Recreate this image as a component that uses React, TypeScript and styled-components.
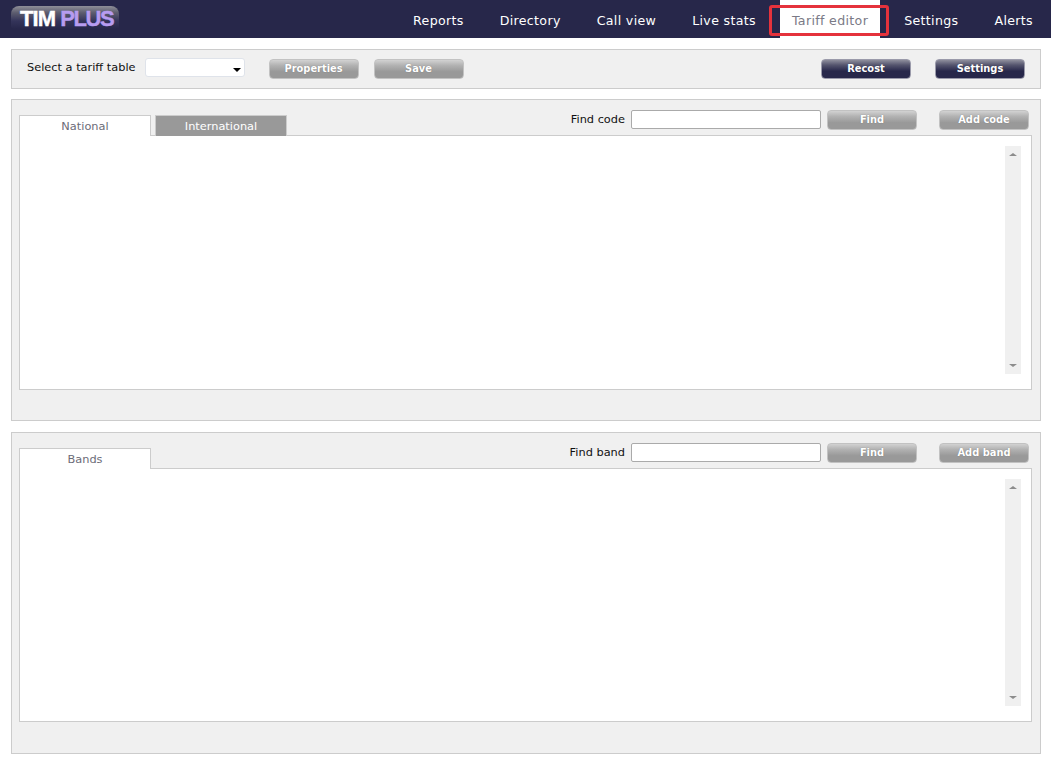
import styled, { createGlobalStyle } from "styled-components";

const GlobalStyle = createGlobalStyle`
  html, body {
    margin: 0;
    background: #fff;
    font-family: "DejaVu Sans", Verdana, sans-serif;
    font-size: 11.35px;
  }
`;

const Header = styled.header`
  position: relative;
  display: flex;
  align-items: stretch;
  justify-content: space-between;
  height: 38px;
  background: #27274a;
`;

const Logo = styled.div`
  display: flex;
  align-items: center;
  width: 108px;
  height: 23px;
  margin: 6px 0 0 11px;
  padding: 2px 0 0 9px;
  box-sizing: border-box;
  border-radius: 8px 8px 3px 3px;
  background: linear-gradient(#8f8f98 0, #5c5c6e 30%, #34345a 65%, #27274a 100%);
  font-family: "Liberation Sans", Arial, sans-serif;
  font-size: 22px;
  font-weight: 700;
  letter-spacing: -0.9px;
  line-height: 23px;
  color: #fff;
  -webkit-text-stroke: 0.4px currentColor;
`;

const LogoAccent = styled.span`
  margin-left: 5px;
  letter-spacing: -1.4px;
  color: #b79cf0;
`;

const Nav = styled.nav`
  display: flex;
`;

const NavItem = styled.a<{ $active?: boolean }>`
  display: flex;
  align-items: center;
  margin: 0 6px;
  padding: 2px 12px 0;
  font-size: 12.6px;
  letter-spacing: 0.33px;
  white-space: nowrap;
  color: ${(p) => (p.$active ? "#7a7a86" : "#fff")};
  background: ${(p) => (p.$active ? "#fff" : "transparent")};
`;

const Highlight = styled.div`
  position: absolute;
  left: 769px;
  top: 5px;
  width: 120px;
  height: 31px;
  box-sizing: border-box;
  border: 3px solid #e5323c;
  border-radius: 3px;
  pointer-events: none;
`;

const Page = styled.main`
  display: flex;
  flex-direction: column;
  padding: 11px 10px 0 11px;
`;

const Panel = styled.section`
  box-sizing: border-box;
  background: #f0f0f0;
  border: 1px solid #ccc;
`;

const Toolbar = styled(Panel)`
  display: flex;
  align-items: center;
  height: 40px;
  margin-bottom: 10px;
  padding: 0 15px;
`;

const ToolbarLabel = styled.label`
  margin: -4px 9px 0 0;
  color: #111;
  white-space: nowrap;
`;

const Select = styled.div`
  position: relative;
  box-sizing: border-box;
  width: 100px;
  height: 19px;
  margin: -3px 24px 0 0;
  background: #fff;
  border: 1px solid #dfe3ea;
  border-radius: 3px;

  &::after {
    content: "";
    position: absolute;
    right: 3px;
    top: 9px;
    border: 4px solid transparent;
    border-bottom-width: 0;
    border-top-color: #000;
  }
`;

const Button = styled.button<{ $dark?: boolean; $gap?: number }>`
  box-sizing: border-box;
  width: 90px;
  height: 20px;
  margin: 0 0 0 ${(p) => p.$gap ?? 0}px;
  padding: 0 0 2px;
  flex: none;
  border: 1px solid ${(p) => (p.$dark ? "#9a9aaa" : "#c2c2c2")};
  border-radius: 4px;
  background: ${(p) =>
    p.$dark
      ? "linear-gradient(#8e8e9c 0, #55556e 28%, #27274a 62%, #27274a 100%)"
      : "linear-gradient(#d2d2d2 0, #b2b2b2 30%, #999 65%, #999 100%)"};
  font-family: inherit;
  font-size: 9.9px;
  font-weight: 700;
  color: #fff;
  text-shadow: 0 0 1px rgba(0, 0, 0, 0.35);
`;

const Spacer = styled.div`
  flex: 1;
`;

const EditorPanel = styled(Panel)`
  height: 322px;
  margin-bottom: 11px;
  padding: 10px 8px 0 7px;
`;

const EditorHead = styled.div`
  display: flex;
  justify-content: space-between;
  height: 26px;
  margin-bottom: -1px;
`;

const Tabs = styled.div`
  display: flex;
  align-items: flex-end;
  gap: 4px;
`;

const Tab = styled.div<{ $active?: boolean }>`
  position: relative;
  z-index: 1;
  box-sizing: border-box;
  display: flex;
  align-items: center;
  justify-content: center;
  width: 132px;
  height: 21px;
  border: 1px solid #ccc;
  border-bottom: 0;
  background: ${(p) => (p.$active ? "#fff" : "#999")};
  color: ${(p) => (p.$active ? "#6c6c78" : "#fff")};
`;

const Tools = styled.div`
  display: flex;
  align-items: flex-start;
  margin-right: 3px;
`;

const FindLabel = styled.label`
  margin-right: 6px;
  line-height: 19px;
  color: #111;
  white-space: nowrap;
`;

const FindInput = styled.input`
  box-sizing: border-box;
  width: 190px;
  height: 19px;
  margin: 0 6px 0 0;
  padding: 0 3px;
  background: #fff;
  border: 1px solid #aaa;
  border-radius: 2px;
  outline: none;
`;

const TableBox = styled.div<{ $height: number }>`
  box-sizing: border-box;
  display: flex;
  justify-content: flex-end;
  height: ${(p) => p.$height}px;
  padding: 10px 10px 15px 0;
  background: #fff;
  border: 1px solid #ccc;
`;

const Scrollbar = styled.div`
  display: flex;
  flex-direction: column;
  align-items: center;
  justify-content: space-between;
  width: 16px;
  padding: 7px 0;
  box-sizing: border-box;
  background: #f0f0f0;
`;

const Arrow = styled.span<{ $down?: boolean }>`
  width: 0;
  height: 0;
  border-left: 4px solid transparent;
  border-right: 4px solid transparent;
  ${(p) =>
    p.$down ? "border-top: 3px solid #8c8c8c;" : "border-bottom: 3px solid #8c8c8c;"}
`;

const Editor = ({
  tabs,
  findLabel,
  addLabel,
  boxHeight,
}: {
  tabs: string[];
  findLabel: string;
  addLabel: string;
  boxHeight: number;
}) => (
  <EditorPanel>
    <EditorHead>
      <Tabs>
        {tabs.map((t, i) => (
          <Tab key={t} $active={i === 0}>
            {t}
          </Tab>
        ))}
      </Tabs>
      <Tools>
        <FindLabel>{findLabel}</FindLabel>
        <FindInput />
        <Button>Find</Button>
        <Button $gap={22}>{addLabel}</Button>
      </Tools>
    </EditorHead>
    <TableBox $height={boxHeight}>
      <Scrollbar>
        <Arrow />
        <Arrow $down />
      </Scrollbar>
    </TableBox>
  </EditorPanel>
);

const navItems = ["Reports", "Directory", "Call view", "Live stats", "Tariff editor", "Settings", "Alerts"];

export default function App() {
  return (
    <>
      <GlobalStyle />
      <Header>
        <Logo>
          TIM<LogoAccent>PLUS</LogoAccent>
        </Logo>
        <Nav>
          {navItems.map((n) => (
            <NavItem key={n} $active={n === "Tariff editor"}>
              {n}
            </NavItem>
          ))}
        </Nav>
        <Highlight />
      </Header>
      <Page>
        <Toolbar>
          <ToolbarLabel>Select a tariff table</ToolbarLabel>
          <Select />
          <Button>Properties</Button>
          <Button $gap={15}>Save</Button>
          <Spacer />
          <Button $dark>Recost</Button>
          <Button $dark $gap={24}>Settings</Button>
        </Toolbar>
        <Editor tabs={["National", "International"]} findLabel="Find code" addLabel="Add code" boxHeight={255} />
        <Editor tabs={["Bands"]} findLabel="Find band" addLabel="Add band" boxHeight={254} />
      </Page>
    </>
  );
}
